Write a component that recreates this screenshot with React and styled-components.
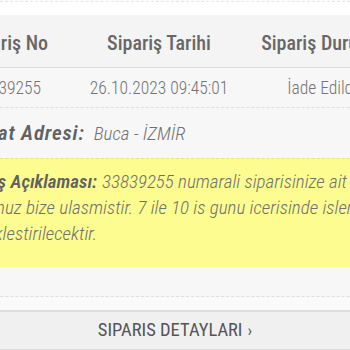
import React from 'react'
import styled, { createGlobalStyle } from 'styled-components'

const GlobalStyle = createGlobalStyle`
  html, body {
    margin: 0;
    padding: 0;
    background: #fbfbfb;
    overflow: hidden;
  }
  body {
    font-family: "Roboto Condensed", Roboto, sans-serif;
    color: #666;
  }
`

const Page = styled.div`
  width: 350px;
  height: 350px;
  overflow: hidden;
  background: #fbfbfb;
`

const TopRule = styled.div`
  height: 13px;
  margin-top: 1px;
  background: #fff;
  border-top: 1px dashed #e6e6e6;
`

const Card = styled.div`
  margin-left: -70px;
  width: 480px;
  background: #f7f7f7;
`

const TableRow = styled.div`
  display: grid;
  grid-template-columns: 154px 150px 176px;
  align-items: center;
  box-sizing: border-box;
  height: ${props => props.height}px;
  padding-top: ${props => props.shift || 0}px;
  background: ${props => props.bg || 'transparent'};
  border-bottom: 1px ${props => props.line} ${props => props.lineColor};
`

const HeadCell = styled.div`
  text-align: center;
  font-size: 20px;
  font-weight: 500;
  color: #676767;
  white-space: nowrap;
`

const DataCell = styled.div`
  text-align: center;
  font-size: 17.5px;
  font-weight: 300;
  color: #747474;
  white-space: nowrap;
`

const InfoRow = styled.div`
  display: flex;
  align-items: center;
  height: 50px;
  padding-left: 9px;
  font-size: 19px;
  font-style: italic;
  white-space: nowrap;
`

// the address label is set a bit wider, like the bold face in the original
const Label = styled.b`
  font-weight: 600;
  color: #626262;
  margin-right: ${props => (props.wide ? 9 : 5)}px;
  font-size: ${props => (props.wide ? 21 : 19)}px;
  letter-spacing: ${props => (props.wide ? 0.8 : 0)}px;
`

const Value = styled.span`
  font-weight: 300;
  color: #707070;
`

const Note = styled.div`
  background: #fcfc90;
  border-top: 1px dashed #e2e28a;
  padding: 10px 0 20px 25px;
  width: 430px;
  font-size: 19px;
  line-height: 26px;
  font-style: italic;
  white-space: nowrap;
`

const NoteSpace = styled.div`
  height: 29px;
  border-bottom: 1px dashed #dedede;
`

const Gap = styled.div`
  height: 13px;
  background: #fafafa;
`

const DetailsButton = styled.button`
  display: flex;
  align-items: center;
  justify-content: center;
  gap: 5px;
  width: 100%;
  height: 40px;
  margin: 0;
  padding: 0 0 1px;
  background: #f0f0f0;
  border: none;
  border-top: 2px solid #dedede;
  border-bottom: 1px solid #dadada;
  font-family: "Roboto Condensed", Roboto, sans-serif;
  font-size: 18.5px;
  font-weight: 400;
  color: #555;
  cursor: pointer;
`

const Chevron = styled.span`
  font-size: 17px;
  line-height: 1;
`

export default function App() {
  return (
    <>
      <GlobalStyle />
      <Page>
        <TopRule />
        <Card>
          <TableRow height={53} shift={3} bg="#f4f4f4" line="solid" lineColor="#dcdcdc">
            <HeadCell>Sipariş No</HeadCell>
            <HeadCell>Sipariş Tarihi</HeadCell>
            <HeadCell>Sipariş Durumu</HeadCell>
          </TableRow>
          <TableRow height={40} line="dashed" lineColor="#dedede">
            <DataCell>33839255</DataCell>
            <DataCell>26.10.2023 09:45:01</DataCell>
            <DataCell>İade Edildi</DataCell>
          </TableRow>
          <InfoRow>
            <Label wide>Teslimat Adresi:</Label>
            <Value>Buca - İZMİR</Value>
          </InfoRow>
          <Note>
            <Label>Sipariş Açıklaması:</Label>
            <Value>33839255 numarali siparisinize ait iade</Value>
            <br />
            <Value>urununuz bize ulasmistir. 7 ile 10 is gunu icerisinde islemleriniz</Value>
            <br />
            <Value>gerceklestirilecektir.</Value>
          </Note>
          <NoteSpace />
        </Card>
        <Gap />
        <DetailsButton>
          SIPARIS DETAYLARI <Chevron>›</Chevron>
        </DetailsButton>
      </Page>
    </>
  )
}
